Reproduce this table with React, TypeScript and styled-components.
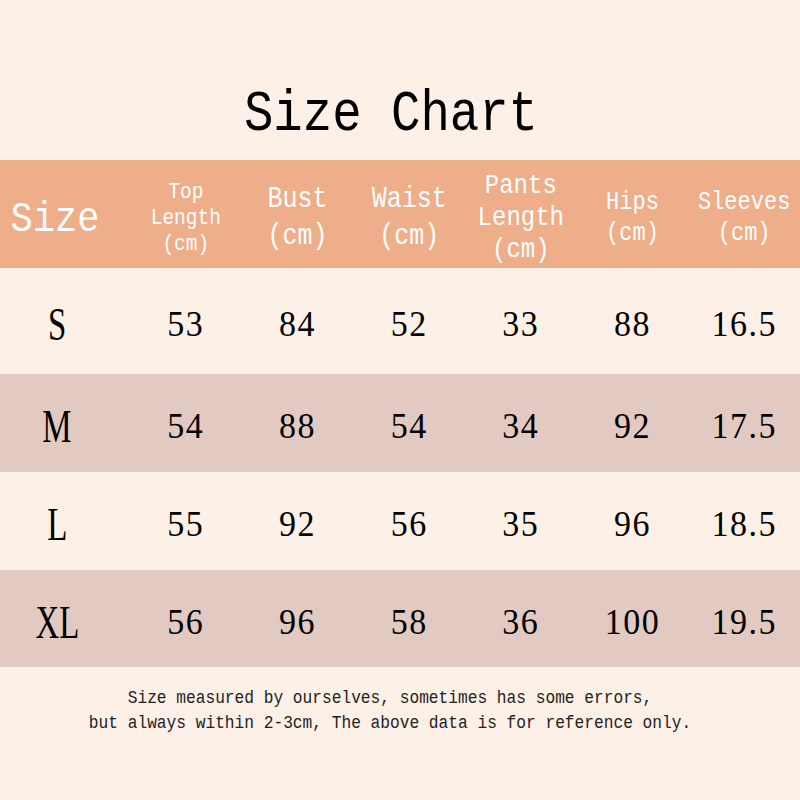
import React from 'react';
import styled, { createGlobalStyle } from 'styled-components';

const GlobalStyle = createGlobalStyle`
    html, body {
        margin: 0;
        padding: 0;
        background: #fdf0e7;
    }
`;

const COLUMNS = '130px repeat(6, 1fr)';

const StyledPage = styled.div`
    width: 800px;
    height: 800px;
    background: #fdf0e7;
    display: flex;
    flex-direction: column;
    overflow: hidden;
`;

const StyledTitle = styled.h1`
    height: 160px;
    margin: 0;
    padding: 69px 18px 0 0;
    box-sizing: border-box;
    display: flex;
    align-items: center;
    justify-content: center;
    font-family: 'Liberation Mono', monospace;
    font-weight: normal;
    font-size: 49px;
    color: #000;

    span {
        display: inline-block;
        transform: scaleY(1.18);
    }
`;

const StyledHeader = styled.div`
    display: grid;
    grid-template-columns: ${COLUMNS};
    height: 108px;
    background: #eeae89;
    color: #fff;
    font-family: 'Liberation Mono', monospace;
`;

const StyledHeaderSize = styled.div`
    display: flex;
    align-items: center;
    justify-content: center;
    padding: 10px 20px 0 0;
    font-size: 37px;

    span {
        display: inline-block;
        transform: scaleY(1.15);
    }
`;

const StyledHeaderCell = styled.div<{ $size: number; $lineHeight: number }>`
    display: flex;
    flex-direction: column;
    align-items: center;
    justify-content: center;
    padding-top: 8px;
    font-size: ${(p) => p.$size}px;
    line-height: ${(p) => p.$lineHeight}px;

    span {
        display: block;
        transform: scaleY(1.15);
    }
`;

const StyledRow = styled.div<{ $height: number; $shaded?: boolean }>`
    display: grid;
    grid-template-columns: ${COLUMNS};
    height: ${(p) => p.$height}px;
    background: ${(p) => (p.$shaded ? '#e2cac3' : '#fdf0e7')};
    color: #000;
    font-family: 'Liberation Serif', serif;
`;

const StyledSizeCell = styled.div`
    display: flex;
    align-items: center;
    justify-content: center;
    padding: 6px 16px 0 0;
    font-size: 47px;

    span {
        display: inline-block;
        transform: scaleX(0.7);
    }
`;

const StyledValueCell = styled.div`
    display: flex;
    align-items: center;
    justify-content: center;
    padding-top: 6px;
    font-size: 34px;
    letter-spacing: 1.5px;

    span {
        display: inline-block;
        transform: scaleY(1.08);
    }
`;

const StyledNote = styled.div`
    padding: 20px 20px 0 0;
    text-align: center;
    font-family: 'Liberation Mono', monospace;
    font-size: 16.2px;
    line-height: 25px;
    color: #222;

    span {
        display: block;
        transform: scaleY(1.12);
    }
`;

const headers = [
    { lines: ['Top', 'Length', '(cm)'], size: 19.5, lineHeight: 26 },
    { lines: ['Bust', '(cm)'], size: 25, lineHeight: 37 },
    { lines: ['Waist', '(cm)'], size: 25, lineHeight: 37 },
    { lines: ['Pants', 'Length', '(cm)'], size: 24, lineHeight: 32 },
    { lines: ['Hips', '(cm)'], size: 22, lineHeight: 31 },
    { lines: ['Sleeves', '(cm)'], size: 22, lineHeight: 31 },
];

const rows = [
    { size: 'S', values: ['53', '84', '52', '33', '88', '16.5'], height: 106 },
    { size: 'M', values: ['54', '88', '54', '34', '92', '17.5'], height: 98, shaded: true },
    { size: 'L', values: ['55', '92', '56', '35', '96', '18.5'], height: 98 },
    { size: 'XL', values: ['56', '96', '58', '36', '100', '19.5'], height: 97, shaded: true },
];

export default function App() {
    return (
        <>
            <GlobalStyle />
            <StyledPage>
                <StyledTitle>
                    <span>Size Chart</span>
                </StyledTitle>
                <StyledHeader>
                    <StyledHeaderSize>
                        <span>Size</span>
                    </StyledHeaderSize>
                    {headers.map((h) => (
                        <StyledHeaderCell key={h.lines.join()} $size={h.size} $lineHeight={h.lineHeight}>
                            {h.lines.map((line) => (
                                <span key={line}>{line}</span>
                            ))}
                        </StyledHeaderCell>
                    ))}
                </StyledHeader>
                {rows.map((row) => (
                    <StyledRow key={row.size} $height={row.height} $shaded={row.shaded}>
                        <StyledSizeCell>
                            <span>{row.size}</span>
                        </StyledSizeCell>
                        {row.values.map((v, i) => (
                            <StyledValueCell key={i}>
                                <span>{v}</span>
                            </StyledValueCell>
                        ))}
                    </StyledRow>
                ))}
                <StyledNote>
                    <span>Size measured by ourselves, sometimes has some errors,</span>
                    <span>but always within 2-3cm, The above data is for reference only.</span>
                </StyledNote>
            </StyledPage>
        </>
    );
}
